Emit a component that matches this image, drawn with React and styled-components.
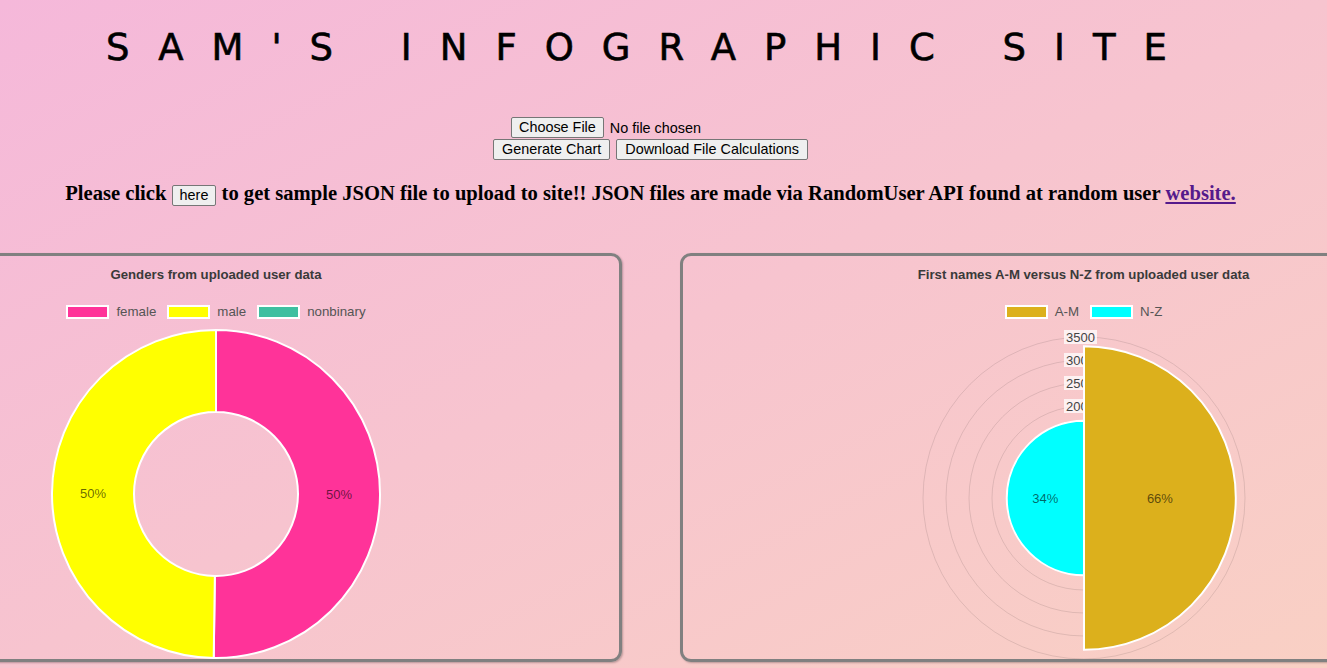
import styled, { createGlobalStyle } from 'styled-components';

const GlobalStyle = createGlobalStyle`
  html, body {
    margin: 0;
    padding: 0;
  }
  body {
    min-height: 100vh;
    overflow: hidden;
    background: linear-gradient(to bottom right, #f5b8da, #f9d0c4);
    font-family: 'Liberation Serif', 'Times New Roman', serif;
  }
`;

const Page = styled.div`
  padding-right: 26px;
  display: flex;
  flex-direction: column;
  align-items: center;
`;

const Title = styled.h1`
  margin: 26px 0 0;
  font-family: 'Comic Sans MS', 'DejaVu Sans', sans-serif;
  font-weight: normal;
  font-size: 37px;
  line-height: 44px;
  letter-spacing: 28px;
  color: #000;
  white-space: nowrap;
  -webkit-text-stroke: 0.6px #000;
`;

const Upload = styled.div`
  margin-top: 47px;
  display: flex;
  flex-direction: column;
  align-items: center;
  gap: 1px;
`;

const FileRow = styled.div`
  width: 279px;
  display: flex;
  align-items: center;
  gap: 6px;
  font-family: 'Liberation Sans', Arial, sans-serif;
  font-size: 14.4px;
  color: #000;
`;

const ButtonRow = styled.div`
  display: flex;
  gap: 6px;
`;

const NativeButton = styled.button`
  height: 21px;
  padding: 0 ${({ $pad }) => $pad || 6}px;
  font-family: 'Liberation Sans', Arial, sans-serif;
  font-size: 14.4px;
  line-height: 19px;
  color: #000;
  background: #efefef;
  border: 1px solid #767676;
  border-radius: 2px;
  vertical-align: middle;
`;

const Notice = styled.h3`
  margin: 22px 0 0;
  font-size: 20.6px;
  line-height: 22px;
  font-weight: bold;
  white-space: nowrap;

  a {
    color: #551a8b;
  }
`;

const ChartsRow = styled.div`
  align-self: stretch;
  margin: 47px -60px 0;
  display: grid;
  grid-template-columns: 1fr 1fr;
  gap: 58px;
`;

const Card = styled.section`
  height: 409px;
  box-sizing: border-box;
  border: 3px solid #808080;
  border-radius: 11px;
  box-shadow: 1px 1px 2px rgba(0, 0, 0, 0.25);
  overflow: hidden;
`;

const ChartBox = styled.div`
  width: 400px;
  margin-left: ${({ $inset }) => $inset}px;
  display: flex;
  flex-direction: column;
  align-items: center;
  font-family: 'Liberation Sans', Arial, sans-serif;
`;

const ChartTitle = styled.div`
  margin-top: 11px;
  font-size: 13.2px;
  line-height: 15px;
  font-weight: bold;
  color: #3a3a3a;
  white-space: nowrap;
`;

const Legend = styled.ul`
  margin: 23px 0 0;
  padding: 0;
  list-style: none;
  display: flex;
  gap: 11px;
`;

const LegendItem = styled.li`
  display: flex;
  align-items: center;
  gap: 7px;
  font-size: 13.3px;
  line-height: 14px;
  color: #555;
`;

const Swatch = styled.span`
  width: 43px;
  height: 14px;
  box-sizing: border-box;
  border: 2px solid #fff;
  background: ${({ $color }) => $color};
`;

const Plot = styled.svg`
  display: block;
  margin-top: 3px;
  overflow: visible;
  font-family: 'Liberation Sans', Arial, sans-serif;
`;

const pt = (cx, cy, r, a) => {
  const rad = (a * Math.PI) / 180;
  return [cx + r * Math.sin(rad), cy - r * Math.cos(rad)];
};

// segment of a ring, angles clockwise from 12 o'clock
const ringPath = (cx, cy, r0, r1, a0, a1) => {
  const large = a1 - a0 > 180 ? 1 : 0;
  const [x1, y1] = pt(cx, cy, r1, a0);
  const [x2, y2] = pt(cx, cy, r1, a1);
  if (r0 === 0) {
    return `M${cx},${cy} L${x1},${y1} A${r1},${r1} 0 ${large} 1 ${x2},${y2} Z`;
  }
  const [x3, y3] = pt(cx, cy, r0, a1);
  const [x4, y4] = pt(cx, cy, r0, a0);
  return `M${x1},${y1} A${r1},${r1} 0 ${large} 1 ${x2},${y2} L${x3},${y3} A${r0},${r0} 0 ${large} 0 ${x4},${y4} Z`;
};

const genders = [
  { label: 'female', color: '#ff3399', from: 0, to: 180.8, pct: '50%' },
  { label: 'male', color: '#ffff00', from: 180.8, to: 360, pct: '50%' },
  { label: 'nonbinary', color: '#3fbfa0' },
];

const names = [
  { label: 'A-M', color: '#dcb01c', value: 3300, from: 0, to: 180, pct: '66%' },
  { label: 'N-Z', color: '#00ffff', value: 1680, from: 180, to: 360, pct: '34%' },
];

const ticks = [500, 1000, 1500, 2000, 2500, 3000, 3500];
const scale = 0.046;

const ChartLegend = ({ items }) => (
  <Legend>
    {items.map((item) => (
      <LegendItem key={item.label}>
        <Swatch $color={item.color} />
        {item.label}
      </LegendItem>
    ))}
  </Legend>
);

const DoughnutChart = () => {
  const cx = 200;
  const cy = 172;
  return (
    <Plot width='400' height='340'>
      {genders
        .filter((g) => g.pct)
        .map((g) => {
          const [lx, ly] = pt(cx, cy, 123, (g.from + g.to) / 2);
          return (
            <g key={g.label}>
              <path
                d={ringPath(cx, cy, 82, 164, g.from, g.to)}
                fill={g.color}
                stroke='#fff'
                strokeWidth='2'
              />
              <text
                x={lx}
                y={ly}
                textAnchor='middle'
                dominantBaseline='central'
                fontSize='13'
                fill='rgba(0,0,0,0.6)'
              >
                {g.pct}
              </text>
            </g>
          );
        })}
    </Plot>
  );
};

const PolarChart = () => {
  const cx = 200;
  const cy = 176;
  return (
    <Plot width='400' height='340'>
      {ticks.map((t) => (
        <circle
          key={t}
          cx={cx}
          cy={cy}
          r={t * scale}
          fill='none'
          stroke='rgba(0,0,0,0.1)'
        />
      ))}
      {ticks.map((t) => (
        <g key={t}>
          <rect
            x={cx - 20}
            y={cy - t * scale - 7}
            width='33'
            height='14'
            fill='rgba(255,255,255,0.75)'
          />
          <text
            x={cx - 3.5}
            y={cy - t * scale}
            textAnchor='middle'
            dominantBaseline='central'
            fontSize='13'
            fill='#444'
          >
            {t}
          </text>
        </g>
      ))}
      {names.map((n) => {
        const r = n.value * scale;
        const [lx, ly] = pt(cx, cy, r / 2, (n.from + n.to) / 2);
        return (
          <g key={n.label}>
            <path
              d={ringPath(cx, cy, 0, r, n.from, n.to)}
              fill={n.color}
              stroke='#fff'
              strokeWidth='2'
            />
            <text
              x={lx}
              y={ly}
              textAnchor='middle'
              dominantBaseline='central'
              fontSize='13'
              fill='rgba(0,0,0,0.6)'
            >
              {n.pct}
            </text>
          </g>
        );
      })}
    </Plot>
  );
};

const App = () => (
  <>
    <GlobalStyle />
    <Page>
      <Title>SAM'S INFOGRAPHIC SITE</Title>

      <Upload>
        <FileRow>
          <NativeButton type='button' $pad={7}>
            Choose File
          </NativeButton>
          No file chosen
        </FileRow>
        <ButtonRow>
          <NativeButton type='button' $pad={8}>
            Generate Chart
          </NativeButton>
          <NativeButton type='button' $pad={8}>
            Download File Calculations
          </NativeButton>
        </ButtonRow>
      </Upload>

      <Notice>
        Please click <NativeButton type='button' $pad={7}>here</NativeButton> to
        get sample JSON file to upload to site!! JSON files are made via
        RandomUser API found at random user <a href='#randomuser'>website.</a>
      </Notice>

      <ChartsRow>
        <Card>
          <ChartBox $inset={73}>
            <ChartTitle>Genders from uploaded user data</ChartTitle>
            <ChartLegend items={genders} />
            <DoughnutChart />
          </ChartBox>
        </Card>
        <Card>
          <ChartBox $inset={201}>
            <ChartTitle>First names A-M versus N-Z from uploaded user data</ChartTitle>
            <ChartLegend items={names} />
            <PolarChart />
          </ChartBox>
        </Card>
      </ChartsRow>
    </Page>
  </>
);

export default App;
